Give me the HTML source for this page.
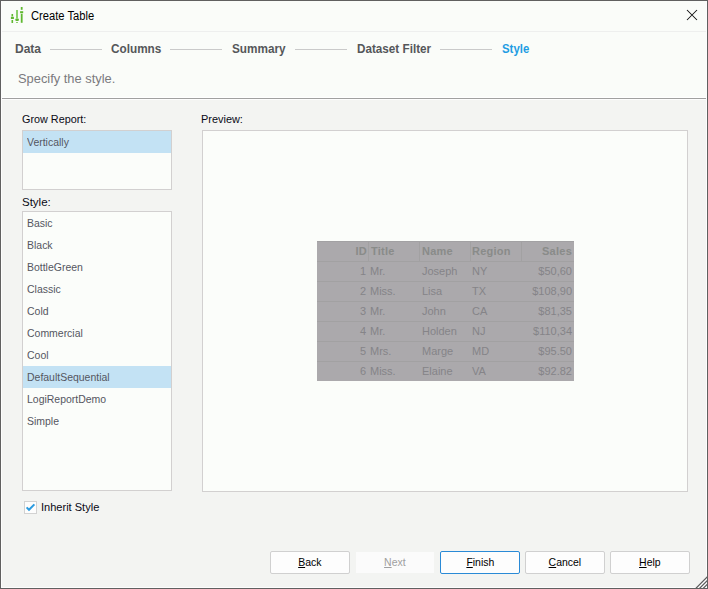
<!DOCTYPE html>
<html><head><meta charset="utf-8">
<style>
*{margin:0;padding:0;box-sizing:border-box;}
html,body{width:708px;height:589px;overflow:hidden;background:#f3f4f3;font-family:"Liberation Sans",sans-serif;}
.a{position:absolute;white-space:nowrap;}
.s{display:inline-block;transform-origin:0 50%;}
#win{position:absolute;left:0;top:0;width:708px;height:589px;background:#f3f4f2;border:1px solid #606060;}
#hl{position:absolute;left:1px;top:1px;width:706px;height:587px;border-left:1px solid #fdfdfd;border-bottom:1px solid #fdfdfd;border-right:1px solid #fdfdfd;}
#top{position:absolute;left:2px;top:1px;width:704px;height:96px;background:#fafcf9;}
.sep1{position:absolute;left:2px;top:31px;width:704px;height:1px;background:#eeefee;}
.sep2{position:absolute;left:2px;top:98px;width:704px;height:1px;background:#a0a0a0;}
.sep2b{position:absolute;left:2px;top:97px;width:704px;height:1px;background:#fff;}
.sep2c{position:absolute;left:2px;top:99px;width:704px;height:1px;background:#fdfdfd;}
.step{position:absolute;top:42px;font-size:12px;font-weight:bold;color:#555759;line-height:15px;white-space:nowrap;}
.line{position:absolute;top:49px;height:1px;background:#cacaca;width:52px;}
.lbl{position:absolute;font-size:11.5px;color:#0a0a16;line-height:14px;white-space:nowrap;}
.box{position:absolute;background:#fbfdfa;border:1px solid #d2d0d0;}
.item{position:absolute;left:0px;width:148px;height:22px;font-size:11.5px;color:#54565f;line-height:22px;padding-left:4px;white-space:nowrap;}
.item .s{transform:scaleX(.91);}
.sel{background:#c3e2f4;}
.btn{position:absolute;top:551px;height:23px;width:80px;border:1px solid #d0d0d0;border-radius:2px;background:#fdfdfd;font-size:11.5px;color:#000;text-align:center;line-height:21px;white-space:nowrap;}
.bs{display:inline-block;transform:scaleX(.91);transform-origin:50% 50%;}
.btn u{text-decoration:underline;text-underline-offset:1px;}
.hl{position:absolute;left:317px;width:257px;height:1px;background:#a2a1a2;}
.vl{position:absolute;top:242px;width:1px;height:19px;background:#a2a1a2;}
.th{position:absolute;top:244px;font-size:11px;font-weight:bold;color:#898b89;line-height:15px;white-space:nowrap;letter-spacing:0.25px;}
.td{position:absolute;font-size:11px;color:#858488;line-height:15px;white-space:nowrap;}
</style></head><body>
<div id="win"></div>
<div id="hl"></div>
<div id="top"></div>
<div class="sep1"></div>
<div class="sep2b"></div>
<div class="sep2"></div>
<div class="sep2c"></div>

<!-- title icon -->
<svg class="a" style="left:0;top:0" width="30" height="30" viewBox="0 0 30 30">
  <g fill="#5fb830">
    <rect x="11.5" y="14" width="1.6" height="2.4"/>
    <rect x="10.9" y="16.8" width="3" height="2.2"/>
    <rect x="11.5" y="20" width="1.6" height="3"/>
    <rect x="20.8" y="7" width="1.8" height="2.8"/>
    <rect x="20.1" y="11.2" width="3.1" height="2"/>
    <rect x="20.8" y="13.8" width="1.8" height="9"/>
  </g>
  <g fill="#8ad06a">
    <rect x="16" y="10" width="2" height="8.3"/>
    <rect x="22" y="22" width="0" height="0"/>
  </g>
  <rect x="15.3" y="18.6" width="3.6" height="2.4" rx="1" fill="#5fb830"/>
  <rect x="16" y="22" width="2" height="1" fill="#8fd06e"/>
</svg>
<div class="a" style="left:31px;top:8px;font-size:12.5px;color:#000;line-height:16px;"><span class="s" style="transform:scaleX(.895)">Create Table</span></div>
<svg class="a" style="left:686px;top:9px" width="12" height="12" viewBox="0 0 12 12"><path d="M1 1L11 11M11 1L1 11" stroke="#111" stroke-width="1.05"/></svg>

<!-- steps -->
<div class="step" style="left:15px">Data</div>
<div class="line" style="left:50px"></div>
<div class="step" style="left:111px"><span class="s" style="transform:scaleX(.98)">Columns</span></div>
<div class="line" style="left:170px"></div>
<div class="step" style="left:232px"><span class="s" style="transform:scaleX(.98)">Summary</span></div>
<div class="line" style="left:295px"></div>
<div class="step" style="left:357px"><span class="s" style="transform:scaleX(.975)">Dataset Filter</span></div>
<div class="line" style="left:440px"></div>
<div class="step" style="left:502px;color:#1f9de3"><span class="s" style="transform:scaleX(.95)">Style</span></div>

<div class="a" style="left:18px;top:71px;font-size:13px;color:#7a7a7e;line-height:15px;"><span class="s" style="transform:scaleX(.99)">Specify the style.</span></div>

<!-- left -->
<div class="lbl" style="left:22px;top:112px"><span class="s" style="transform:scaleX(.94)">Grow Report:</span></div>
<div class="box" style="left:22px;top:130px;width:150px;height:60px">
  <div class="item sel" style="top:0px;left:0;width:148px;height:22px;line-height:22px"><span class="s">Vertically</span></div>
</div>
<div class="lbl" style="left:22px;top:195px">Style:</div>
<div class="box" style="left:22px;top:211px;width:150px;height:280px">
  <div class="item" style="top:0px"><span class="s">Basic</span></div>
  <div class="item" style="top:22px"><span class="s">Black</span></div>
  <div class="item" style="top:44px"><span class="s">BottleGreen</span></div>
  <div class="item" style="top:66px"><span class="s">Classic</span></div>
  <div class="item" style="top:88px"><span class="s">Cold</span></div>
  <div class="item" style="top:110px"><span class="s">Commercial</span></div>
  <div class="item" style="top:132px"><span class="s">Cool</span></div>
  <div class="item sel" style="top:154px"><span class="s">DefaultSequential</span></div>
  <div class="item" style="top:176px"><span class="s">LogiReportDemo</span></div>
  <div class="item" style="top:198px"><span class="s">Simple</span></div>
</div>

<div class="lbl" style="left:201px;top:112px"><span class="s" style="transform:scaleX(.95)">Preview:</span></div>
<div class="box" style="left:202px;top:130px;width:486px;height:362px"></div>
<div class="a" style="left:317px;top:241px;width:257px;height:140px;background:#aba9ac;border-top:1px solid #a2a1a3;"></div>
<div class="hl" style="top:261px"></div>
<div class="hl" style="top:281px"></div>
<div class="hl" style="top:301px"></div>
<div class="hl" style="top:321px"></div>
<div class="hl" style="top:341px"></div>
<div class="hl" style="top:361px"></div>
<div class="vl" style="left:368px"></div>
<div class="vl" style="left:419px"></div>
<div class="vl" style="left:470px"></div>
<div class="vl" style="left:521px"></div>
<div class="th" style="right:341px">ID</div>
<div class="th" style="left:371px">Title</div>
<div class="th" style="left:422px">Name</div>
<div class="th" style="left:472px">Region</div>
<div class="th" style="right:136px">Sales</div>

<div class="td" style="top:264px;right:342px">1</div><div class="td" style="top:264px;left:370px">Mr.</div><div class="td" style="top:264px;left:422px">Joseph</div><div class="td" style="top:264px;left:472px">NY</div><div class="td" style="top:264px;right:136px">$50,60</div>
<div class="td" style="top:284px;right:342px">2</div><div class="td" style="top:284px;left:370px">Miss.</div><div class="td" style="top:284px;left:422px">Lisa</div><div class="td" style="top:284px;left:472px">TX</div><div class="td" style="top:284px;right:136px">$108,90</div>
<div class="td" style="top:304px;right:342px">3</div><div class="td" style="top:304px;left:370px">Mr.</div><div class="td" style="top:304px;left:422px">John</div><div class="td" style="top:304px;left:472px">CA</div><div class="td" style="top:304px;right:136px">$81,35</div>
<div class="td" style="top:324px;right:342px">4</div><div class="td" style="top:324px;left:370px">Mr.</div><div class="td" style="top:324px;left:422px">Holden</div><div class="td" style="top:324px;left:472px">NJ</div><div class="td" style="top:324px;right:136px">$110,34</div>
<div class="td" style="top:344px;right:342px">5</div><div class="td" style="top:344px;left:370px">Mrs.</div><div class="td" style="top:344px;left:422px">Marge</div><div class="td" style="top:344px;left:472px">MD</div><div class="td" style="top:344px;right:136px">$95.50</div>
<div class="td" style="top:364px;right:342px">6</div><div class="td" style="top:364px;left:370px">Miss.</div><div class="td" style="top:364px;left:422px">Elaine</div><div class="td" style="top:364px;left:472px">VA</div><div class="td" style="top:364px;right:136px">$92.82</div>

<!-- checkbox -->
<div class="a" style="left:24px;top:501px;width:13px;height:13px;border:1px solid #d2d2d2;background:#fdfdfd;"></div>
<svg class="a" style="left:24px;top:501px" width="13" height="13" viewBox="0 0 13 13"><path d="M2.6 6.4L5 8.8L10.4 3.4" stroke="#2a9be0" stroke-width="2" fill="none"/></svg>
<div class="lbl" style="left:41px;top:500px"><span class="s" style="transform:scaleX(.96)">Inherit Style</span></div>

<!-- buttons -->
<div class="btn" style="left:270px"><span class="bs"><u>B</u>ack</span></div>
<div class="btn" style="left:356px;top:552px;height:21px;width:78px;border-color:#fbfbfb;background:#fbfbfb;border-radius:0;color:#a0a0a0;line-height:19px;"><span class="bs"><u>N</u>ext</span></div>
<div class="btn" style="left:440px;border-color:#2a8ad6"><span class="bs"><u>F</u>inish</span></div>
<div class="btn" style="left:525px"><span class="bs"><u>C</u>ancel</span></div>
<div class="btn" style="left:610px"><span class="bs"><u>H</u>elp</span></div>

<!-- grip -->
<svg class="a" style="left:688px;top:569px" width="19" height="19" viewBox="0 0 19 19">
  <path d="M6 20L20 6L20 20Z" fill="#fdfdfd"/>
  <path d="M7.2 20L20 7.2M10.9 20L20 10.9M14.6 20L20 14.6" stroke="#5c5c5c" stroke-width="1.25"/>
</svg>
</body></html>
